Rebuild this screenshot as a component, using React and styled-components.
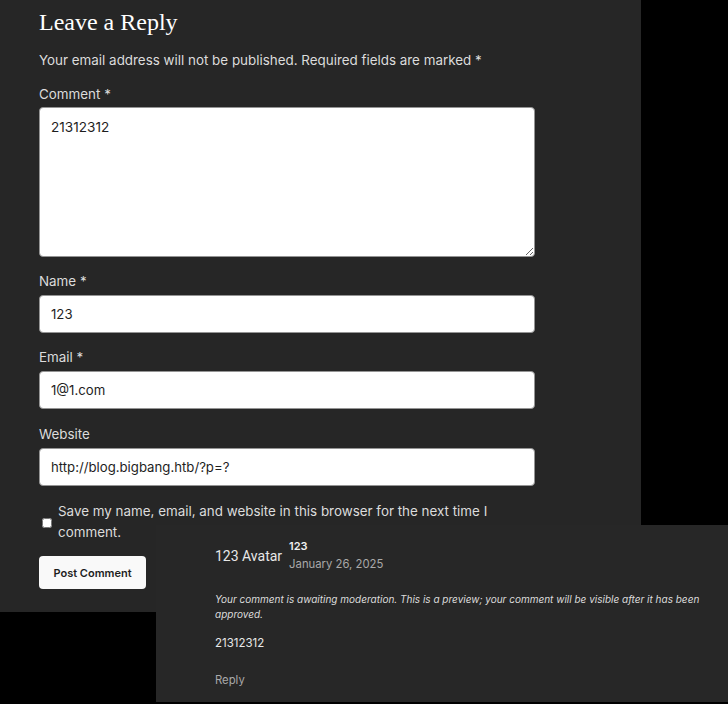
import styled, { createGlobalStyle } from 'styled-components'

const GlobalStyle = createGlobalStyle`
  body {
    margin: 0;
    background: #000;
    font-family: Inter, "Noto Sans", sans-serif;
  }
`

const Page = styled.div`
  position: relative;
  width: 728px;
  height: 704px;
  overflow: hidden;
`

const Column = styled.div`
  width: 641px;
  height: 612px;
  box-sizing: border-box;
  background: #262626;
  padding: 8px 0 0 39px;
`

const Form = styled.form`
  width: 496px;
  display: flex;
  flex-direction: column;
`

const Title = styled.h2`
  margin: 0;
  font-family: "Liberation Serif", "DejaVu Serif", serif;
  font-weight: 400;
  font-size: 24px;
  line-height: 29px;
  color: #fff;
`

const Notice = styled.p`
  margin: 13px 0 0;
  font-size: 13.4px;
  line-height: 20px;
  color: #dcdcdc;
`

const Field = styled.div`
  display: flex;
  flex-direction: column;
  margin-top: ${({ $gap }) => $gap || '14px'};
`

const Label = styled.label`
  font-size: 13.4px;
  line-height: 20px;
  color: #dcdcdc;
  margin-bottom: ${({ $tight }) => ($tight ? '3px' : '4px')};
`

const TextArea = styled.textarea`
  box-sizing: border-box;
  width: 496px;
  height: 150px;
  padding: 9px 11px;
  border: 1px solid #949494;
  border-radius: 4px;
  background: #fff;
  color: #1e1e1e;
  font-family: Inter, sans-serif;
  font-size: 13.6px;
  line-height: 20px;
  outline: none;
`

const Input = styled.input`
  box-sizing: border-box;
  width: 496px;
  height: 38px;
  padding: 0 11px;
  border: 1px solid #949494;
  border-radius: 4px;
  background: #fff;
  color: #1e1e1e;
  font-family: Inter, sans-serif;
  font-size: 13.2px;
  outline: none;
`

const CheckRow = styled.div`
  display: flex;
  align-items: center;
  gap: 6px;
  margin-top: 15px;
`

const Check = styled.input`
  width: 10px;
  height: 10px;
  margin: 2px 0 0 3px;
  flex: none;
`

const CheckText = styled.label`
  font-size: 13.4px;
  line-height: 21px;
  color: #dcdcdc;
`

const Submit = styled.button`
  align-self: flex-start;
  margin-top: 13px;
  width: 107px;
  height: 33px;
  border: none;
  border-radius: 4px;
  background: #f9f9f9;
  color: #1e1e1e;
  font-family: Inter, sans-serif;
  font-size: 11px;
  font-weight: 600;
`

const Preview = styled.article`
  position: absolute;
  left: 156px;
  top: 525px;
  width: 572px;
  height: 177px;
  box-sizing: border-box;
  background: #272727;
  padding: 13px 0 0 59px;
`

const Head = styled.header`
  display: flex;
  align-items: center;
  gap: 7px;
`

const AvatarAlt = styled.span`
  font-family: Roboto, "Noto Sans", sans-serif;
  font-size: 14px;
  line-height: 20px;
  color: #e8e8e8;
`

const Meta = styled.div`
  display: flex;
  flex-direction: column;
`

const Author = styled.b`
  font-size: 11px;
  line-height: 16px;
  font-weight: 600;
  color: #f0f0f0;
`

const Muted = styled.span`
  font-size: 11.3px;
  line-height: ${({ $lh }) => $lh || '20px'};
  color: #a9a9a9;
  margin-top: ${({ $mt }) => $mt || '0'};
  display: block;
`

const Awaiting = styled.p`
  margin: 18px 0 0;
  width: 495px;
  font-size: 10px;
  line-height: 15px;
  font-style: italic;
  color: #dcdcdc;
`

const Body = styled.p`
  margin: 13px 0 0;
  font-size: 11.5px;
  line-height: 16px;
  color: #e8e8e8;
`

export default function App() {
  return (<>
    <GlobalStyle />
    <Page>
      <Column>
        <Title>Leave a Reply</Title>
        <Notice>Your email address will not be published. Required fields are marked *</Notice>
        <Form onSubmit={e => e.preventDefault()}>
          <Field>
            <Label $tight>Comment *</Label>
            <TextArea defaultValue="21312312" />
          </Field>
          <Field>
            <Label>Name *</Label>
            <Input defaultValue="123" />
          </Field>
          <Field>
            <Label>Email *</Label>
            <Input defaultValue="1@1.com" />
          </Field>
          <Field $gap="15px">
            <Label>Website</Label>
            <Input defaultValue="http://blog.bigbang.htb/?p=?" />
          </Field>
          <CheckRow>
            <Check type="checkbox" id="save" />
            <CheckText htmlFor="save">
              Save my name, email, and website in this browser for the next time I comment.
            </CheckText>
          </CheckRow>
          <Submit type="submit">Post Comment</Submit>
        </Form>
      </Column>

      <Preview>
        <Head>
          <AvatarAlt>123 Avatar</AvatarAlt>
          <Meta>
            <Author>123</Author>
            <Muted>January 26, 2025</Muted>
          </Meta>
        </Head>
        <Awaiting>
          Your comment is awaiting moderation. This is a preview; your comment will be visible after it has been approved.
        </Awaiting>
        <Body>21312312</Body>
        <Muted $lh="16px" $mt="21px">Reply</Muted>
      </Preview>
    </Page>
  </>)
}
